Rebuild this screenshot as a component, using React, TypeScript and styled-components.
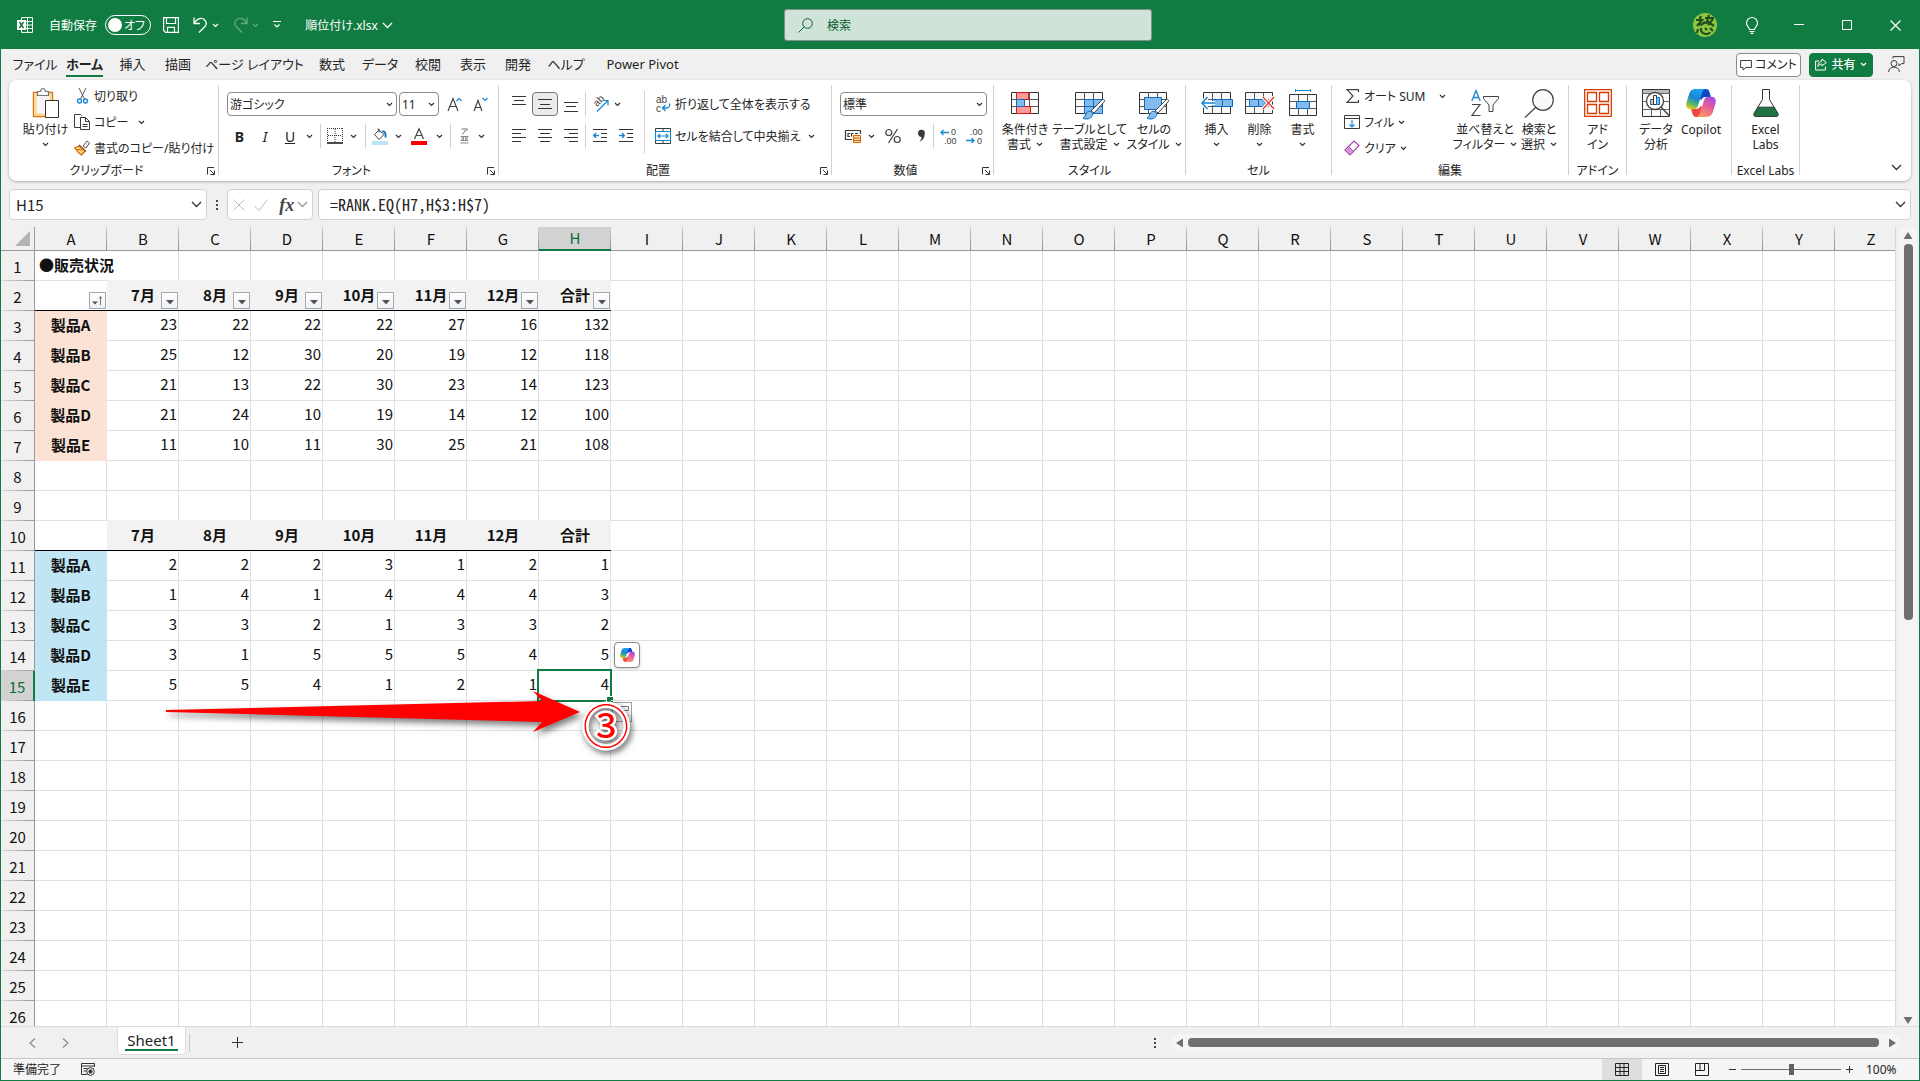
import React from "react";
import styled, { createGlobalStyle, css } from "styled-components";

const GREEN = "#107c41";
const UI = `"Noto Sans", "Noto Sans CJK JP", sans-serif`;
const CELL = `"Noto Sans CJK JP", sans-serif`;

const Global = createGlobalStyle`
  * { box-sizing: border-box; }
  body { margin: 0; }
  button, input, select {
    font: inherit;
    font-feature-settings: inherit;
    color: inherit;
    margin: 0;
    padding: 0;
    border: 0;
    background: none;
    outline: none;
  }
  svg { display: block; flex: none; overflow: visible; }
`;

/* ---------- shell ---------- */
const Shell = styled.div`
  height: 100vh;
  display: flex;
  flex-direction: column;
  background: #f0f0f0;
  border: 1px solid ${GREEN};
  border-top: 0;
  font-family: ${UI};
  font-feature-settings: "palt";
  font-size: 12px;
  line-height: 15px;
  color: #242424;
  overflow: hidden;
`;

/* ---------- title bar ---------- */
const TitleBar = styled.header`
  flex: none;
  height: 49px;
  padding-bottom: 8px;
  display: grid;
  grid-template-columns: 49fr 368px 48fr;
  align-items: end;
  background: ${GREEN};
  color: #fff;
`;
const TitleLeft = styled.div`
  height: 32px;
  display: flex;
  align-items: center;
  padding-left: 16px;
`;
const AutoSave = styled.label`
  display: flex;
  align-items: center;
  gap: 8px;
  margin: 0 12px 0 16px;
`;
const Toggle = styled.span`
  position: relative;
  width: 46px;
  height: 20px;
  border: 1px solid #fff;
  border-radius: 10px;
  display: flex;
  align-items: center;
  padding: 0 5px 0 2px;
  justify-content: space-between;
  &::before {
    content: "";
    width: 14px;
    height: 14px;
    border-radius: 50%;
    background: #fff;
  }
`;
const ToggleInput = styled.input`
  position: absolute;
  inset: 0;
  opacity: 0;
`;
const TitleButton = styled.button<{ $w: number; $dim?: boolean }>`
  width: ${(p) => p.$w}px;
  height: 32px;
  display: flex;
  align-items: center;
  justify-content: center;
  gap: 4px;
  white-space: nowrap;
  opacity: ${(p) => (p.$dim ? 0.35 : 1)};
`;
const SearchBox = styled.label`
  height: 32px;
  display: flex;
  align-items: center;
  gap: 14px;
  padding-left: 13px;
  background: #cfe3d8;
  border: 1px solid #86908a;
  border-radius: 3px;
  color: #0c5f32;
`;
const SearchInput = styled.input`
  flex: 1;
  &::placeholder { color: #0c5f32; opacity: 1; }
`;
const TitleRight = styled.div`
  height: 32px;
  display: flex;
  align-items: center;
  justify-content: flex-end;
`;

/* ---------- tabs ---------- */
const TabRow = styled.nav`
  flex: none;
  height: 31px;
  display: flex;
  align-items: center;
  padding: 0 7px 0 8px;
`;
const Tab = styled.button<{ $w: number; $active?: boolean }>`
  width: ${(p) => p.$w}px;
  height: 24px;
  padding-top: 2px;
  font-size: 13px;
  line-height: 18px;
  white-space: nowrap;
  display: flex;
  justify-content: center;
  ${(p) => p.$active && css`font-weight: 700;`}
  span {
    height: 22px;
    ${(p) => p.$active && css`border-bottom: 2px solid ${GREEN};`}
  }
`;
const Spacer = styled.div`flex: 1;`;
const CommentButton = styled.button`
  height: 24px;
  width: 65px;
  display: flex;
  align-items: center;
  justify-content: center;
  gap: 3px;
  background: #fff;
  border: 1px solid #8a8a8a;
  border-radius: 4px;
  margin-right: 8px;
  white-space: nowrap;
`;
const ShareButton = styled(CommentButton)`
  width: 64px;
  gap: 4px;
  background: ${GREEN};
  border-color: ${GREEN};
  color: #fff;
  font-weight: 500;
`;
const PersonButton = styled.button`
  width: 31px;
  height: 24px;
  display: flex;
  align-items: center;
  justify-content: center;
`;

/* ---------- ribbon ---------- */
const Ribbon = styled.section`
  flex: none;
  height: 101px;
  margin: 0 8px;
  display: flex;
  background: #fff;
  border-radius: 8px;
  box-shadow: 0 1px 3px rgba(0, 0, 0, 0.28);
`;
const GroupBox = styled.section<{ $w: number }>`
  width: ${(p) => p.$w}px;
  display: flex;
  flex-direction: column;
  position: relative;
`;
const GroupBody = styled.div<{ $pad?: number }>`
  flex: 1;
  display: flex;
  align-items: flex-start;
  padding-left: ${(p) => p.$pad ?? 0}px;
`;
const GroupLabel = styled.div<{ $launch?: boolean }>`
  height: 20px;
  line-height: 20px;
  padding-right: ${(p) => (p.$launch ? 14 : 0)}px;
  text-align: center;
  white-space: nowrap;
`;
const Launcher = styled.button`
  position: absolute;
  right: 3px;
  bottom: 6px;
`;
const GroupSep = styled.div`
  flex: none;
  width: 1px;
  margin: 5px 0 6px;
  background: #d1d1d1;
`;
const Big = styled.button<{ $w: number }>`
  width: ${(p) => p.$w}px;
  padding-top: 9px;
  display: flex;
  flex-direction: column;
  align-items: center;
  white-space: nowrap;
`;
const BigIcon = styled.span`
  height: 28px;
  margin-bottom: 5px;
  display: flex;
  align-items: center;
`;
const BigLine = styled.span`
  height: 15px;
  display: flex;
  align-items: center;
  gap: 5px;
`;
const List = styled.div<{ $w?: number }>`
  padding-top: 3px;
  width: ${(p) => (p.$w ? p.$w + "px" : "auto")};
`;
const ListRow = styled.div`
  height: 26px;
  display: flex;
  align-items: center;
`;
const ListButton = styled.button`
  display: flex;
  align-items: center;
  gap: 4px;
  white-space: nowrap;
`;
const IconSlot = styled.span`
  width: 16px;
  display: flex;
  justify-content: center;
`;
const Rows = styled.div<{ $w?: number }>`
  padding-top: 12px;
  display: flex;
  flex-direction: column;
  gap: 8px;
  width: ${(p) => (p.$w ? p.$w + "px" : "auto")};
`;
const Row = styled.div<{ $pad?: number }>`
  height: 24px;
  display: flex;
  align-items: center;
  padding-left: ${(p) => p.$pad ?? 0}px;
`;
const Tool = styled.button<{ $w: number; $on?: boolean }>`
  width: ${(p) => p.$w}px;
  height: 24px;
  display: flex;
  align-items: center;
  justify-content: center;
  font-size: 14px;
  ${(p) => p.$on && css`
    background: #ebebeb;
    border: 1px solid #767676;
    border-radius: 4px;
  `}
`;
const Sep = styled.span<{ $m: number; $tall?: boolean }>`
  flex: none;
  width: 1px;
  height: ${(p) => (p.$tall ? 62 : 24)}px;
  margin: ${(p) => (p.$tall ? 11 : 0)}px ${(p) => p.$m}px 0;
  background: #d1d1d1;
`;
const Combo = styled.span<{ $w: number }>`
  width: ${(p) => p.$w}px;
  height: 24px;
  display: flex;
  align-items: center;
  margin-right: 2px;
  border: 1px solid #8a8a8a;
  border-radius: 4px;
  background: #fff;
  padding-right: 3px;
  select {
    flex: 1;
    min-width: 0;
    height: 22px;
    padding-left: 2px;
    appearance: none;
  }
`;
const Collapse = styled.button`
  align-self: flex-end;
  padding: 0 9px 10px;
`;

/* ---------- formula bar ---------- */
const FormulaRow = styled.div`
  flex: none;
  height: 31px;
  margin: 8px 8px 7px;
  display: flex;
  align-items: stretch;
  font-size: 15px;
`;
const Field = styled.div<{ $w?: number }>`
  ${(p) => (p.$w ? css`width: ${p.$w}px;` : css`flex: 1;`)}
  display: flex;
  align-items: center;
  background: #fff;
  border: 1px solid #d1d1d1;
  border-radius: 4px;
  padding: 0 4px;
`;
const FieldInput = styled.input`
  flex: 1;
  min-width: 0;
  padding-left: 2px;
  font-family: ${CELL};
`;
const FormulaInput = styled(FieldInput)`
  padding: 0 0 2px 7px;
  font-size: 16px;
  font-feature-settings: "hwid";
`;
const Grip = styled.span`
  width: 20px;
  display: flex;
  align-items: center;
  justify-content: center;
`;
const FormulaGap = styled.span`width: 5px;`;
const FxButton = styled.button<{ $w: number }>`
  width: ${(p) => p.$w}px;
  display: flex;
  justify-content: center;
  font: italic 700 18px/24px "Liberation Serif", serif;
  color: #444;
`;

/* ---------- sheet ---------- */
const SheetArea = styled.main`
  flex: 1;
  min-height: 0;
  display: flex;
`;
const GridClip = styled.div`
  position: relative;
  flex: 1;
  min-width: 0;
  overflow: hidden;
  background: #fff;
  border-right: 1px solid #d9d9d9;
`;
const Table = styled.table`
  table-layout: fixed;
  width: 1906px;
  border-collapse: separate;
  border-spacing: 0;
  font-family: ${CELL};
  font-feature-settings: normal;
  font-size: 15px;
  line-height: 20px;
  color: #111;
`;
const Corner = styled.td`
  width: 34px;
  height: 24px;
  padding: 0 3px 3px 0;
  vertical-align: bottom;
  background: #f0f0f0;
  border-right: 1px solid #999;
  border-bottom: 1px solid #999;
  svg { margin-left: auto; }
`;
const ColHead = styled.th<{ $on: boolean }>`
  width: 72px;
  height: 24px;
  padding: 0;
  font-weight: 400;
  border-bottom: 1px solid #999;
  background: linear-gradient(#d0d0d0, #8f8f8f) right / 1px 100% no-repeat, #f0f0f0;
  ${(p) => p.$on && css`
    color: #0f6b39;
    background-color: #d2d2d2;
    border-bottom: 2px solid ${GREEN};
  `}
`;
const RowHead = styled.th<{ $on: boolean }>`
  height: 30px;
  padding: 2px 0 0;
  font-weight: 400;
  border-right: 1px solid #999;
  background: linear-gradient(90deg, #d8d8d8, #999) bottom / 100% 1px no-repeat, #f0f0f0;
  ${(p) => p.$on && css`
    color: #0f6b39;
    background-color: #d2d2d2;
    border-right: 2px solid ${GREEN};
  `}
`;
type Kind = "plain" | "title" | "blankHead" | "head" | "peach" | "sky" | "num" | "sel";
const Cell = styled.td<{ $k: Kind; $above?: boolean }>`
  position: relative;
  height: 30px;
  padding: 0 1px 3px 0;
  white-space: nowrap;
  text-align: right;
  border-right: 1px solid #e0e0e0;
  border-bottom: 1px solid ${(p) => (p.$above ? "#f2f2f2" : "#e0e0e0")};
  ${(p) => p.$k === "title" && css`
    padding: 0 0 2px 4px;
    text-align: left;
    font-weight: 700;
    border-right: 0;
  `}
  ${(p) => (p.$k === "head" || p.$k === "blankHead") && css`
    padding: 0 0 2px;
    text-align: center;
    font-weight: 700;
    border-right: 0;
    border-bottom-color: #000;
  `}
  ${(p) => p.$k === "head" && css`
    background: #f2f2f2;
  `}
  ${(p) => (p.$k === "peach" || p.$k === "sky") && css`
    padding: 0 0 2px;
    text-align: center;
    font-weight: 700;
    background: ${p.$k === "peach" ? "#fbe2d5" : "#c0e6f5"};
    border-color: ${p.$k === "peach" ? "#fbe2d5" : "#c0e6f5"};
  `}
  ${(p) => p.$k === "sel" && css`
    &::before {
      content: "";
      position: absolute;
      inset: -2px;
      border: 2px solid ${GREEN};
    }
    &::after {
      content: "";
      position: absolute;
      right: -3px;
      bottom: -3px;
      width: 6px;
      height: 6px;
      background: ${GREEN};
      border: solid #fff;
      border-width: 1px 0 0 1px;
    }
  `}
`;
const FilterButton = styled.button`
  position: absolute;
  right: 1px;
  bottom: 1px;
  width: 17px;
  height: 17px;
  display: flex;
  align-items: center;
  justify-content: center;
  background: linear-gradient(#fff, #eef1f5);
  border: 1px solid #a3a9b3;
`;
const CopilotChip = styled.button`
  position: absolute;
  left: 613px;
  top: 415px;
  width: 26px;
  height: 26px;
  display: flex;
  align-items: center;
  justify-content: center;
  background: #fff;
  border: 1px solid #8a8a8a;
  border-radius: 4px;
  box-shadow: 0 1px 3px rgba(0, 0, 0, 0.2);
`;
const FillOptions = styled.button`
  position: absolute;
  left: 611px;
  top: 475px;
  width: 20px;
  height: 20px;
  background: #fff;
  border: 1px solid #a0a0a0;
`;
const Arrow = styled.svg`
  position: absolute;
  left: 155px;
  top: 454px;
  filter: drop-shadow(3px 4px 3px rgba(0, 0, 0, 0.5));
`;
const StepMark = styled.span`
  position: absolute;
  left: 582px;
  top: 473px;
  font: 400 46px/46px ${CELL};
  color: #f00;
  -webkit-text-stroke: 5px #fff;
  paint-order: stroke fill;
  filter: drop-shadow(2px 3px 3px rgba(0, 0, 0, 0.6));
`;
const VScroll = styled.div`
  width: 18px;
  margin: 0 2px 0 3px;
  display: flex;
  flex-direction: column;
  align-items: center;
  padding: 5px 0 2px;
  background: #f5f5f5;
  border-radius: 8px;
`;
const VTrack = styled.div`
  flex: 1;
  width: 9px;
  margin: 4px 0;
`;
const VThumb = styled.div`
  height: 49%;
  border-radius: 4px;
  background: #6f6f6f;
`;

/* ---------- sheet tabs & status ---------- */
const SheetBar = styled.div`
  flex: none;
  height: 32px;
  display: flex;
  align-items: center;
  border-top: 1px solid #dcdcdc;
  padding-right: 18px;
`;
const NavButton = styled.button<{ $w: number }>`
  width: ${(p) => p.$w}px;
  height: 30px;
  display: flex;
  align-items: center;
  justify-content: center;
`;
const PrevButton = styled(NavButton)`padding-left: 14px;`;
const SheetTab = styled.button`
  align-self: flex-start;
  width: 69px;
  height: 28px;
  margin-left: 35px;
  background: #fff;
  border: 1px solid #dcdcdc;
  border-top: 0;
  border-radius: 0 0 5px 5px;
  font-size: 15px;
  display: flex;
  justify-content: center;
  span {
    padding: 3px 2px 0;
    height: 24px;
    line-height: 20px;
    border-bottom: 2px solid ${GREEN};
  }
`;
const TabSep = styled.span`
  width: 1px;
  height: 18px;
  margin-left: 3px;
  background: #c8c8c8;
`;
const HScroll = styled.div`
  flex: 0 1 730px;
  height: 17px;
  margin-left: 6px;
  display: flex;
  align-items: center;
  padding: 0 5px;
  background: #f5f5f5;
  border-radius: 8px;
`;
const HThumb = styled.div`
  flex: 1;
  height: 9px;
  margin: 0 9px 0 4px;
  border-radius: 4px;
  background: #6f6f6f;
`;
const Status = styled.footer`
  flex: none;
  height: 22px;
  display: flex;
  align-items: center;
  gap: 20px;
  padding: 0 19px 0 12px;
  background: #f5f5f5;
  border-top: 1px solid #c6c6c6;
`;
const Views = styled.div`
  display: flex;
  align-self: stretch;
`;
const ViewButton = styled.button<{ $on?: boolean }>`
  width: 40px;
  display: flex;
  align-items: center;
  justify-content: center;
  background: ${(p) => (p.$on ? "#dedede" : "transparent")};
`;
const Zoom = styled.div`
  display: flex;
  align-items: center;
  margin-left: -14px;
  gap: 4px;
`;
const ZoomRange = styled.input`
  width: 100px;
  height: 12px;
  appearance: none;
  background: linear-gradient(#6b6b6b, #6b6b6b) center / 100% 1px no-repeat;
  &::-webkit-slider-thumb {
    appearance: none;
    width: 5px;
    height: 11px;
    background: #616161;
  }
`;
const ZoomButton = styled.button`
  width: 9px;
  height: 12px;
  display: flex;
  align-items: center;
  justify-content: center;
`;
const ZoomValue = styled.span`
  width: 34px;
  margin-left: 8px;
`;

/* ---------- icons ---------- */
const Svg = ({ w, h, vb, children }: { w: number; h: number; vb?: string; children: React.ReactNode }) => (
  <svg width={w} height={h} viewBox={vb ?? `0 0 ${w} ${h}`} fill="none" stroke="#3b3b3b" strokeWidth="1" aria-hidden>
    {children}
  </svg>
);
const Glyph = styled.text`
  font-family: "Liberation Sans", sans-serif;
  fill: #444;
  stroke: none;
`;
const Chev = ({ c = "#333", big }: { c?: string; big?: boolean }) =>
  big ? (
    <Svg w={11} h={7}><path d="M1 1l4.500 4.500L10 1" stroke={c} strokeWidth="1.300" /></Svg>
  ) : (
    <Svg w={7} h={5}><path d="M1 1l2.500 2.500L6 1" stroke={c} strokeWidth="1.200" /></Svg>
  );
const LaunchIcon = () => (
  <Svg w={8} h={8}><path d="M.5 7.500V.5H7M3 3l4 4M7.500 3.500v4h-4" stroke="#333" /></Svg>
);
const CopilotIcon = ({ w, h, id }: { w: number; h: number; id: string }) => (
  <svg width={w} height={h} viewBox="0 0 30 28" aria-hidden>
    <defs>
      <linearGradient id={id + "a"} x1="0.6" y1="0" x2="0.2" y2="1">
        <stop offset="0" stopColor="#1aa6f5" /><stop offset="0.45" stopColor="#1b84d0" />
        <stop offset="0.72" stopColor="#4fb869" /><stop offset="1" stopColor="#f4cf14" />
      </linearGradient>
      <linearGradient id={id + "b"} x1="0.8" y1="0" x2="0.3" y2="1">
        <stop offset="0" stopColor="#a54be8" /><stop offset="0.45" stopColor="#e75b9c" />
        <stop offset="1" stopColor="#ff9a62" />
      </linearGradient>
    </defs>
    <path d="M17 0h3c2 0 3 1.200 3.600 3.400L25 8h-5c-2.500 0-4 1-4.800 3.400L12 6z" fill="#1149c4" />
    <path d="M13 28h-3c-2 0-3-1.200-3.600-3.400L5 20h5c2.500 0 4-1 4.800-3.400L18 22z" fill="#ee4a42" />
    <path d="M9.500 0H20c-2 0-3.200 1.200-3.900 3.400L12.200 16c-1 3-2.200 4.300-5 4.300H4.500C.8 20.300-.4 17 .5 13.500L3.300 4.400C4.200 1.600 6 0 9.500 0z" fill={`url(#${id}a)`} />
    <path d="M20.500 28H10c2 0 3.200-1.200 3.900-3.400L17.800 12c1-3 2.200-4.300 5-4.300h2.700c3.700 0 4.900 3.300 4 6.800l-2.800 9.100c-.9 2.800-2.700 4.400-6.200 4.400z" fill={`url(#${id}b)`} />
  </svg>
);
const GridBase = () => (
  <>
    <path d="M.5.5h27v21H.5z" fill="#fafafa" stroke="#333" />
    <path d="M.5 7.500h27M.5 14.500h27M9.500.5v21M18.500.5v21" stroke="#555" />
  </>
);
const Brush = () => (
  <>
    <path d="M16 19L27 8c1.500-1.500 3.500 0 2 2L19 21z" fill="#fff" stroke="#444" />
    <path d="M8 26c3-1 2-5 5-6.500 3-1 5.500 1.500 4.500 4C16 27 11 28 8 26z" fill="#83bcec" stroke="#0f6cbd" />
  </>
);
const CondIcon = () => (
  <Svg w={28} h={22}>
    <GridBase />
    <path d="M5.500.5h12v7h-12zM5.500 14.500h14v7h-14z" fill="#ff9a9a" stroke="#e3170a" />
    <path d="M5.500 7.500h8v7h-8z" fill="#83bcec" stroke="#0f6cbd" />
  </Svg>
);
const TableIcon = () => (
  <Svg w={30} h={28} vb="0 -3 30 28">
    <GridBase /><path d="M9.500 7.500h18v14h-18z" fill="#83bcec" stroke="#0f6cbd" />
    <path d="M9.500 14.500h18M18.500 7.500v14" stroke="#0f6cbd" /><Brush />
  </Svg>
);
const StyleIcon = () => (
  <Svg w={30} h={28} vb="0 -3 30 28">
    <GridBase /><path d="M5.500 5.500h17v12h-17z" fill="#83bcec" stroke="#0f6cbd" /><Brush />
  </Svg>
);
const InsertIcon = () => (
  <Svg w={32} h={22}>
    <g transform="translate(2 0)"><GridBase /></g>
    <path d="M11.500 7.500h20v7h-20z" fill="#83bcec" stroke="#0f6cbd" /><path d="M21.500 7.500v7" stroke="#0f6cbd" />
    <path d="M14 11H1M6.500 5L1 11l5.500 6" stroke="#fff" strokeWidth="4" />
    <path d="M14 11H1M6.500 5L1 11l5.500 6" stroke="#1787d4" strokeWidth="1.500" />
  </Svg>
);
const DeleteIcon = () => (
  <Svg w={30} h={22}>
    <GridBase />
    <path d="M4.500 7.500h13l3 3.500-3 3.500h-13z" fill="#83bcec" stroke="#0f6cbd" /><path d="M13.500 7.500v7" stroke="#0f6cbd" />
    <path d="M18 5l11 12M29 5L18 17" stroke="#fff" strokeWidth="4" />
    <path d="M18 5l11 12M29 5L18 17" stroke="#e8413a" strokeWidth="1.400" />
  </Svg>
);
const FormatIcon = () => (
  <Svg w={28} h={28} vb="0 -5 28 28">
    <GridBase /><path d="M7.500 7.500h13v7h-13z" fill="#83bcec" stroke="#0f6cbd" />
    <path d="M6.500-5v3M21.500-5v3M6.500-3.500h15" stroke="#1787d4" />
  </Svg>
);
const PasteIcon = () => (
  <Svg w={28} h={30}>
    <path d="M1.500 4.500h19v24h-19z" fill="#fff" stroke="#d9730b" strokeWidth="1.400" />
    <path d="M3.500 6.500h15v20h-15z" fill="#f6f6f6" stroke="#fbd580" strokeWidth="2" />
    <path d="M5.500 7.500v-4h3c.5-4 4.500-4 5 0h3v4z" fill="#fafafa" stroke="#777" strokeWidth="1.200" />
    <path d="M13.500 12.500h13v17h-13z" fill="#fff" stroke="#333" />
  </Svg>
);
const CutIcon = () => (
  <Svg w={11} h={16}>
    <path d="M2 0l5.500 11M9 0L3.500 11" stroke="#555" />
    <circle cx="2.500" cy="13" r="2" stroke="#1787d4" strokeWidth="1.300" /><circle cx="8.500" cy="13" r="2" stroke="#1787d4" strokeWidth="1.300" />
  </Svg>
);
const CopyIcon = () => (
  <Svg w={16} h={16}>
    <path d="M6 13.500H.5V.5h6l1 1" /><path d="M6.500 3.500h5l4 4v8h-9z" fill="#fff" /><path d="M11.500 3.500v4h4M8.500 10.500h5M8.500 12.500h5" />
  </Svg>
);
const PainterIcon = () => (
  <Svg w={16} h={16}>
    <path d="M9 6l4-5 2.500 2L12 8z" fill="#fff" stroke="#555" /><path d="M5 5l7 6.500" stroke="#555" strokeWidth="1.600" />
    <path d="M5 6L.8 8c2 3 4 5.500 6.700 7l3.500-4z" fill="#fbd580" stroke="#d9620b" strokeWidth="1.300" /><path d="M3 9.500l5 .5" stroke="#d9620b" />
  </Svg>
);
const lines = (a: [number, number][], ys: number[]) => (
  <Svg w={15} h={16}>{a.map(([x, w], i) => <path key={i} d={`M${x} ${ys[i]}.5h${w}`} stroke="#333" />)}</Svg>
);
const Top = () => lines([[0, 14], [2, 10], [0, 14]], [0, 4, 8]);
const Mid = () => lines([[0, 14], [2, 10], [0, 14]], [3, 8, 12]);
const Bot = () => lines([[0, 14], [2, 10], [0, 14]], [6, 10, 15]);
const AL = () => lines([[0, 14], [0, 9], [0, 14], [0, 9]], [1, 5, 9, 13]);
const AC = () => lines([[0, 14], [2, 10], [0, 14], [2, 10]], [1, 5, 9, 13]);
const AR = () => lines([[0, 14], [5, 9], [0, 14], [5, 9]], [1, 5, 9, 13]);
const Indent = ({ out }: { out?: boolean }) => (
  <Svg w={15} h={16}>
    <path d="M0 1.500h14M8 5.500h6M8 9.500h6M0 13.500h14" stroke="#333" />
    <path d={out ? "M6 7.500H1M3 5L.7 7.500 3 10" : "M0 7.500h5M3 5l2.300 2.500L3 10"} stroke="#1787d4" strokeWidth="1.300" />
  </Svg>
);
const OrientIcon = () => (
  <Svg w={17} h={16}>
    <Glyph x="0" y="0" transform="translate(5 11) rotate(-45)" fontSize="10">ab</Glyph>
    <path d="M5 15.500L15.500 5M11 4.500h5V9.500" stroke="#1787d4" strokeWidth="1.200" />
  </Svg>
);
const WrapIcon = () => (
  <Svg w={14} h={18}>
    <Glyph x="0" y="8" fontSize="10">ab</Glyph><Glyph x="0" y="17" fontSize="10">c</Glyph>
    <path d="M13.500 8.500c1 3-1 4.500-3.500 4.500H7M9.500 10l-3 3 3 3" stroke="#1787d4" strokeWidth="1.300" />
  </Svg>
);
const MergeIcon = () => (
  <Svg w={16} h={16}>
    <path d="M.5.5h15v15H.5zM8 .5v3M8 12.500v3" /><path d="M.5 3.500h15v9H.5z" fill="#fff" stroke="#1787d4" strokeWidth="1.200" />
    <path d="M3 8h10M5 6L3 8l2 2M11 6l2 2-2 2" stroke="#1787d4" strokeWidth="1.200" />
  </Svg>
);
const BorderIcon = () => (
  <Svg w={16} h={16}>
    <path d="M.5 0v14M15.500 0v14M0 .5h15M8 1v13M1 7.500h14" strokeDasharray="1 1" stroke="#333" /><path d="M0 15h16" stroke="#111" strokeWidth="1.500" />
  </Svg>
);
const BucketIcon = () => (
  <Svg w={16} h={17}>
    <path d="M7.500 1.500L2.500 6.500l4.500 5 5-5-4.500-4z" fill="#fff" stroke="#444" /><path d="M6 .5l1.500 4" stroke="#444" />
    <path d="M10 3.500c3-1 4 2 3.500 6" stroke="#0f6cbd" strokeWidth="1.800" /><path d="M0 13h16v4H0z" fill="#bfe5f5" stroke="none" />
  </Svg>
);
const FontColorIcon = () => (
  <Svg w={16} h={17}><path d="M3.500 11L8 .8 12.500 11M5 7.500h6" stroke="#444" strokeWidth="1.200" /><path d="M0 13h16v4H0z" fill="#f00" stroke="none" /></Svg>
);
const PhoneticIcon = () => (
  <Svg w={9} h={16}>
    <path d="M1.500 1h6L5.500 3.500M4.500 2.500c0 2-1 3-2.500 3.500" stroke="#777" />
    <path d="M.5 8.500h8M2 9v3M7 9v3M.5 12.500h8M.5 15h8M3.500 8.500v4M5.500 8.500v4" stroke="#8a8a8a" />
  </Svg>
);
const GrowIcon = ({ down }: { down?: boolean }) => (
  <Svg w={15} h={15}>
    {down ? <path d="M1 14L5 3.500 9 14M2.500 10.500h5" stroke="#444" strokeWidth="1.200" /> : <path d="M1 14L6 1.500 11 14M2.500 9.500h7" stroke="#444" strokeWidth="1.200" />}
    <path d={down ? "M9.500 1L12 3.500 14.500 1" : "M9.500 4L12 1.500 14.500 4"} stroke="#1787d4" strokeWidth="1.200" />
  </Svg>
);
const MoneyIcon = () => (
  <Svg w={17} h={15}>
    <path d="M7 10.500H.5v-9h15V5M5 4.500H3v3h2M8.500 4.500h-2v3M10 4.500h3" strokeWidth="1.200" />
    <path d="M8.500 6.500h7v7h-7z" fill="#fbd9a8" stroke="#d9620b" /><path d="M8.500 9h7M8.500 11.500h7" stroke="#d9620b" />
  </Svg>
);
const DecIcon = ({ less }: { less?: boolean }) => (
  <Svg w={16} h={18}>
    <Glyph x={less ? 4 : 11} y="8" fontSize="9">{less ? ".00" : "0"}</Glyph>
    <Glyph x={less ? 11 : 4} y="17" fontSize="9">{less ? "0" : ".00"}</Glyph>
    <path d={less ? "M0 13.500h8M5.500 11L8 13.500 5.500 16" : "M9 5.500H1M3.500 3L1 5.500 3.500 8"} stroke="#1787d4" strokeWidth="1.300" />
  </Svg>
);
const SigmaIcon = () => <Svg w={13} h={14}><path d="M12.500 3V.6H1L7 7l-6 6.400h11.500V11" stroke="#444" strokeWidth="1.200" /></Svg>;
const FillIcon = () => (
  <Svg w={16} h={14}><path d="M.5.5h15v13H.5zM.5 3.500h15" /><path d="M8 5v7M5.500 9.500L8 12l2.500-2.500" stroke="#1787d4" strokeWidth="1.200" /></Svg>
);
const EraserIcon = () => (
  <Svg w={16} h={16}><path d="M1 10L10 1l5 4.500L6 15z" fill="#fff" stroke="#a347ab" strokeWidth="1.200" /><path d="M1 10l3.500-3.500 5 5L6 15z" fill="#d59ada" stroke="#a347ab" /></Svg>
);
const SortIcon = () => (
  <Svg w={28} h={28}>
    <path d="M.8 12L5 1.500 9.200 12M2.300 8.500h5.500" stroke="#1787d4" strokeWidth="1.300" /><path d="M1 15.500h8L1 26.500h8.500" stroke="#444" strokeWidth="1.200" />
    <path d="M12.500 7.500h15v2L22 16v6.500h-4V16l-5.500-6.500z" fill="#fafafa" stroke="#444" />
  </Svg>
);
const FindIcon = () => <Svg w={30} h={29}><circle cx="19" cy="11" r="10.300" fill="#fafafa" stroke="#444" strokeWidth="1.200" /><path d="M11.500 18.500L1 28.500" stroke="#444" strokeWidth="1.200" /></Svg>;
const AddinIcon = () => <Svg w={28} h={28}><path d="M.7.7h26.600v26.600H.7zM3.500 3.500h9v9h-9zM15.500 3.500h9v9h-9zM3.500 15.500h9v9h-9zM15.500 15.500h9v9h-9z" stroke="#d83b01" strokeWidth="1.300" /></Svg>;
const AnalyzeIcon = () => (
  <Svg w={28} h={28}>
    <path d="M.5.5h27v27H.5z" fill="#fafafa" stroke="#333" /><path d="M1 1h26v3H1z" fill="#bbb" stroke="none" />
    <path d="M.5 4.500h27M.5 12.500h27M.5 20.500h27M9.500 20v7M18.500 20v7" stroke="#666" />
    <circle cx="13" cy="12" r="8.500" fill="#fff" stroke="#444" strokeWidth="1.300" /><path d="M19 18l8 8.500" stroke="#444" strokeWidth="1.500" />
    <path d="M8.500 10.500h3v5h-3z" fill="#ccc" stroke="#555" /><path d="M11.500 6.500h3v9h-3z" fill="#fff" stroke="#333" /><path d="M14.500 8.500h3v7h-3z" fill="#83bcec" stroke="#0f6cbd" />
  </Svg>
);
const FlaskIcon = () => (
  <Svg w={26} h={28}>
    <path d="M9.500.5h7v10l8.500 14c.6 1.500 0 3-2 3H3c-2 0-2.600-1.500-2-3l8.500-14z" fill="#fafafa" stroke="#333" />
    <path d="M5 18h16l4 7c.4 1.300-.4 2.500-2 2.500H3c-1.600 0-2.400-1.200-2-2.500z" fill="#217346" stroke="#333" strokeWidth=".6" />
  </Svg>
);
const ExcelIcon = () => (
  <Svg w={16} h={16}>
    <path d="M4.500.6h11v14.800h-11zM10.500.6v14.800M4 4.500h11.500M4 8h11.500M4 11.500h11.500" stroke="#fff" /><path d="M0 3h9v10H0z" fill="#fff" stroke="none" />
    <path d="M2.500 5l4 6M6.500 5l-4 6" stroke={GREEN} strokeWidth="1.500" />
  </Svg>
);
const SaveIcon = () => <Svg w={16} h={16}><path d="M.6.6h14.800v14.800H2.500L.6 13.500zM3.500.6v5.900h9V.6M4.500 15.400v-5h7v5" stroke="#fff" strokeWidth="1.200" /></Svg>;
const UndoIcon = () => <Svg w={15} h={16}><path d="M1 .5v6h6M1.200 6.300C4 1 9 .5 11.500 2.800c2.500 2.400 2 5 .2 7L6 15.500" stroke="#fff" strokeWidth="1.300" /></Svg>;
const RedoIcon = () => <Svg w={15} h={16}><path d="M14 .5v6H8M13.800 6.300C11 1 6 .5 3.500 2.800 1 5.200 1.500 7.800 3.300 9.800L9 15.500" stroke="#fff" strokeWidth="1.300" /></Svg>;
const Avatar = () => (
  <Svg w={24} h={24}>
    <circle cx="12" cy="12" r="12" fill="#8cc63f" stroke="none" />
    <path d="M3 7h6l-5 6M8 3L6 8M4 12l6-1M12 5h9M16 2l-3 9M14 8l7 5M20 6l-5 6M8 12l4-3M5 16l-1 4M8 15c-1 7 8 7 9 4M12 15l2 2M17 15l3 3" stroke="#1f4d1c" strokeWidth="2.200" />
  </Svg>
);
const BulbIcon = () => (
  <Svg w={12} h={17}><path d="M3.500 12.500c0-2-3-3-3-6.500a5.500 5.500 0 0111 0c0 3.500-3 4.500-3 6.500zM3.500 14.500h5M4.500 16.400h3" stroke="#fff" strokeWidth="1.200" /></Svg>
);
const CommentIcon = () => <Svg w={12} h={12}><path d="M.6 1.500h10.800v7H6L3 11V8.500H.6z" /></Svg>;
const ShareIcon = () => <Svg w={12} h={13}><path d="M4 3H.6v9h9.800V8.500M7 1l4.300 3.500L7 8V6C5 6 4 7 3 8.500 3 5.500 4.500 3.300 7 3z" stroke="#fff" /></Svg>;
const PersonIcon = () => <Svg w={17} h={17}><circle cx="6" cy="7.500" r="3" /><path d="M.6 16c0-6.500 10.800-6.500 10.800 0M5 2.500V.6h11v7h-2.500L11 10V7.600" /></Svg>;
const FunnelIcon = ({ sorted }: { sorted?: boolean }) => (
  <Svg w={13} h={13}>
    {sorted ? (
      <><path d="M1 7.500h6L4 10.500z" fill="#555" stroke="none" /><path d="M9.500 11V2.500M8 4.500l1.500-2 1.500 2" stroke="#777" /></>
    ) : (
      <path d="M3 6h8l-4 4.500z" fill="#555" stroke="none" />
    )}
  </Svg>
);

/* ---------- pieces ---------- */
const Group = ({ w, label, pad, launch, children }: { w: number; label?: string; pad?: number; launch?: boolean; children: React.ReactNode }) => (
  <>
    <GroupBox $w={w}>
      <GroupBody $pad={pad}>{children}</GroupBody>
      <GroupLabel $launch={launch}>{label}</GroupLabel>
      {launch && <Launcher aria-label={`${label}の設定`}><LaunchIcon /></Launcher>}
    </GroupBox>
    <GroupSep />
  </>
);
const BigButton = ({ w, icon, a, b, menu }: { w: number; icon: React.ReactNode; a: string; b?: string; menu?: boolean }) => (
  <Big $w={w}>
    <BigIcon>{icon}</BigIcon>
    <BigLine>{a}</BigLine>
    {(b || menu) && <BigLine>{b}{menu && <Chev />}</BigLine>}
  </Big>
);
const Item = ({ icon, text, menu }: { icon: React.ReactNode; text: string; menu?: boolean }) => (
  <ListButton><IconSlot>{icon}</IconSlot>{text}{menu && <Chev />}</ListButton>
);
const Drop = ({ w, name }: { w: number; name: string }) => <Tool $w={w} aria-label={name}><Chev /></Tool>;

const tabs: [string, number][] = [
  ["ファイル", 52], ["ホーム", 47], ["挿入", 49], ["描画", 42], ["ページ レイアウト", 111], ["数式", 44],
  ["データ", 52], ["校閲", 44], ["表示", 46], ["開発", 44], ["ヘルプ", 52], ["Power Pivot", 101],
];
const columns = "ABCDEFGHIJKLMNOPQRSTUVWXYZ".split("");
const months = ["7月", "8月", "9月", "10月", "11月", "12月", "合計"];
const products = ["製品A", "製品B", "製品C", "製品D", "製品E"];
const sales = [
  [23, 22, 22, 22, 27, 16, 132],
  [25, 12, 30, 20, 19, 12, 118],
  [21, 13, 22, 30, 23, 14, 123],
  [21, 24, 10, 19, 14, 12, 100],
  [11, 10, 11, 30, 25, 21, 108],
];
const ranks = [
  [2, 2, 2, 3, 1, 2, 1],
  [1, 4, 1, 4, 4, 4, 3],
  [3, 3, 2, 1, 3, 3, 2],
  [3, 1, 5, 5, 5, 4, 5],
  [5, 5, 4, 1, 2, 1, 4],
];

function cellAt(row: number, col: number): { k: Kind; v?: React.ReactNode; above?: boolean } {
  const above = (row === 1 || row === 9) && col >= 1 && col <= 7;
  if (row === 1 && col === 0) return { k: "title", v: "●販売状況" };
  if (col > 7) return { k: "plain" };
  if (row === 2 || row === 10) {
    const filter = row === 2 && (
      <FilterButton aria-label={`${columns[col]}列のフィルター`}><FunnelIcon sorted={col === 0} /></FilterButton>
    );
    return col === 0 ? { k: "blankHead", v: filter } : { k: "head", v: <>{months[col - 1]}{filter}</> };
  }
  const top = row >= 3 && row <= 7;
  if (top || (row >= 11 && row <= 15)) {
    const i = top ? row - 3 : row - 11;
    if (col === 0) return { k: top ? "peach" : "sky", v: products[i] };
    return { k: row === 15 && col === 7 ? "sel" : "num", v: (top ? sales : ranks)[i][col - 1] };
  }
  return { k: "plain", above };
}

export default function App() {
  return (
    <Shell>
      <Global />
      <TitleBar>
        <TitleLeft>
          <ExcelIcon />
          <AutoSave>
            自動保存
            <Toggle><ToggleInput type="checkbox" role="switch" aria-label="自動保存" />オフ</Toggle>
          </AutoSave>
          <TitleButton $w={16} aria-label="上書き保存"><SaveIcon /></TitleButton>
          <TitleButton $w={54} aria-label="元に戻す"><UndoIcon /><Chev c="#fff" /></TitleButton>
          <TitleButton $w={26} $dim aria-label="やり直し"><RedoIcon /><Chev c="#fff" /></TitleButton>
          <TitleButton $w={36} aria-label="クイック アクセス ツール バーのカスタマイズ">
            <Svg w={8} h={8}><path d="M0 .5h8M1.500 3.500L4 6l2.500-2.500" stroke="#fff" strokeWidth="1.200" /></Svg>
          </TitleButton>
          <TitleButton $w={108}>順位付け.xlsx<Chev c="#fff" big /></TitleButton>
        </TitleLeft>
        <SearchBox>
          <Svg w={15} h={15}><circle cx="9.500" cy="5.500" r="4.800" stroke="#0c5f32" /><path d="M6 9l-5.500 5.500" stroke="#0c5f32" /></Svg>
          <SearchInput type="text" placeholder="検索" aria-label="検索" />
        </SearchBox>
        <TitleRight>
          <TitleButton $w={47} aria-label="アカウント"><Avatar /></TitleButton>
          <TitleButton $w={47} aria-label="ヒント"><BulbIcon /></TitleButton>
          <TitleButton $w={48} aria-label="最小化"><Svg w={10} h={10}><path d="M0 4.500h10" stroke="#fff" /></Svg></TitleButton>
          <TitleButton $w={48} aria-label="最大化"><Svg w={10} h={10}><path d="M.5.5h9v9h-9z" stroke="#fff" /></Svg></TitleButton>
          <TitleButton $w={48} aria-label="閉じる"><Svg w={11} h={11}><path d="M.5.5l10 10M10.500.5l-10 10" stroke="#fff" strokeWidth="1.200" /></Svg></TitleButton>
        </TitleRight>
      </TitleBar>

      <TabRow>
        {tabs.map(([t, w]) => <Tab key={t} $w={w} $active={t === "ホーム"}><span>{t}</span></Tab>)}
        <Spacer />
        <CommentButton><CommentIcon />コメント</CommentButton>
        <ShareButton><ShareIcon />共有<Chev c="#fff" /></ShareButton>
        <PersonButton aria-label="プレゼンス"><PersonIcon /></PersonButton>
      </TabRow>

      <Ribbon>
        <Group w={209} label="クリップボード" pad={8} launch>
          <BigButton w={57} icon={<PasteIcon />} a="貼り付け" menu />
          <List>
            <ListRow><Item icon={<CutIcon />} text="切り取り" /></ListRow>
            <ListRow><Item icon={<CopyIcon />} text="コピー" /><Drop w={26} name="コピーのメニュー" /></ListRow>
            <ListRow><Item icon={<PainterIcon />} text="書式のコピー/貼り付け" /></ListRow>
          </List>
        </Group>
        <Group w={279} label="フォント" pad={8} launch>
          <Rows>
            <Row>
              <Combo $w={170}><select aria-label="フォント"><option>游ゴシック</option></select><Chev /></Combo>
              <Combo $w={40}><select aria-label="フォント サイズ"><option>11</option></select><Chev /></Combo>
              <Tool $w={26} aria-label="フォント サイズの拡大"><GrowIcon /></Tool>
              <Tool $w={26} aria-label="フォント サイズの縮小"><GrowIcon down /></Tool>
            </Row>
            <Row>
              <Tool $w={25} aria-label="太字"><b>B</b></Tool>
              <Tool $w={26} aria-label="斜体"><i>I</i></Tool>
              <Tool $w={24} aria-label="下線"><u>U</u></Tool>
              <Drop w={14} name="下線の種類" /><Sep $m={4} />
              <Tool $w={20} aria-label="罫線"><BorderIcon /></Tool>
              <Drop w={16} name="罫線の種類" /><Sep $m={4} />
              <Tool $w={20} aria-label="塗りつぶしの色"><BucketIcon /></Tool>
              <Drop w={16} name="塗りつぶしの色一覧" />
              <Tool $w={26} aria-label="フォントの色"><FontColorIcon /></Tool>
              <Drop w={14} name="フォントの色一覧" /><Sep $m={4} />
              <Tool $w={18} aria-label="ふりがな"><PhoneticIcon /></Tool>
              <Drop w={16} name="ふりがなのメニュー" />
            </Row>
          </Rows>
        </Group>
        <Group w={332} label="配置" pad={7} launch>
          <Rows $w={133}>
            <Row>
              <Tool $w={26} aria-label="上揃え"><Top /></Tool>
              <Tool $w={26} $on aria-label="上下中央揃え"><Mid /></Tool>
              <Tool $w={26} aria-label="下揃え"><Bot /></Tool>
              <Sep $m={1} />
              <Tool $w={26} aria-label="方向"><OrientIcon /></Tool>
              <Drop w={8} name="方向のメニュー" />
            </Row>
            <Row>
              <Tool $w={26} aria-label="左揃え"><AL /></Tool>
              <Tool $w={26} aria-label="中央揃え"><AC /></Tool>
              <Tool $w={26} aria-label="右揃え"><AR /></Tool>
              <Sep $m={1} />
              <Tool $w={26} aria-label="インデントを減らす"><Indent out /></Tool>
              <Tool $w={26} aria-label="インデントを増やす"><Indent /></Tool>
            </Row>
          </Rows>
          <Sep $m={5} $tall />
          <Rows $w={169}>
            <Row $pad={5}><Item icon={<WrapIcon />} text="折り返して全体を表示する" /></Row>
            <Row $pad={5}><Item icon={<MergeIcon />} text="セルを結合して中央揃え" /><Spacer /><Drop w={16} name="結合のメニュー" /></Row>
          </Rows>
        </Group>
        <Group w={161} label="数値" pad={8} launch>
          <Rows>
            <Row><Combo $w={147}><select aria-label="表示形式"><option>標準</option></select><Chev /></Combo></Row>
            <Row>
              <Tool $w={26} aria-label="通貨表示形式"><MoneyIcon /></Tool>
              <Drop w={10} name="通貨のメニュー" />
              <Tool $w={34} aria-label="パーセント スタイル">
                <Svg w={16} h={16}><circle cx="3.800" cy="4.500" r="3" strokeWidth="1.200" /><circle cx="12.200" cy="11.500" r="3" strokeWidth="1.200" /><path d="M12.500 1L3.500 15" strokeWidth="1.200" /></Svg>
              </Tool>
              <Tool $w={22} aria-label="桁区切りスタイル">
                <Svg w={9} h={14}><path d="M1 4a3.300 3.300 0 116.800.5c0 4-2 7-5.300 8.500 1.500-2 2.200-3.500 2-5C2.500 8 1 6.500 1 4z" fill="#3b3b3b" stroke="none" /></Svg>
              </Tool>
              <Sep $m={1} />
              <Tool $w={26} aria-label="小数点以下の表示桁数を増やす"><DecIcon /></Tool>
              <Tool $w={26} aria-label="小数点以下の表示桁数を減らす"><DecIcon less /></Tool>
            </Row>
          </Rows>
        </Group>
        <Group w={191} label="スタイル" pad={2}>
          <BigButton w={58} icon={<CondIcon />} a="条件付き" b="書式" menu />
          <BigButton w={71} icon={<TableIcon />} a="テーブルとして" b="書式設定" menu />
          <BigButton w={58} icon={<StyleIcon />} a="セルの" b="スタイル" menu />
        </Group>
        <Group w={145} label="セル" pad={9}>
          <BigButton w={43} icon={<InsertIcon />} a="挿入" menu />
          <BigButton w={43} icon={<DeleteIcon />} a="削除" menu />
          <BigButton w={43} icon={<FormatIcon />} a="書式" menu />
        </Group>
        <Group w={236} label="編集" pad={12}>
          <List $w={110}>
            <ListRow><Item icon={<SigmaIcon />} text="オート SUM" /><Spacer /><Drop w={24} name="オート SUM のメニュー" /></ListRow>
            <ListRow><Item icon={<FillIcon />} text="フィル" menu /></ListRow>
            <ListRow><Item icon={<EraserIcon />} text="クリア" menu /></ListRow>
          </List>
          <BigButton w={62} icon={<SortIcon />} a="並べ替えと" b="フィルター" menu />
          <BigButton w={46} icon={<FindIcon />} a="検索と" b="選択" menu />
        </Group>
        <Group w={57} label="アドイン"><BigButton w={57} icon={<AddinIcon />} a="アド" b="イン" /></Group>
        <Group w={104} pad={6}>
          <BigButton w={46} icon={<AnalyzeIcon />} a="データ" b="分析" />
          <BigButton w={44} icon={<CopilotIcon w={30} h={28} id="big" />} a="Copilot" />
        </Group>
        <Group w={67} label="Excel Labs"><BigButton w={67} icon={<FlaskIcon />} a="Excel" b="Labs" /></Group>
        <Spacer />
        <Collapse aria-label="リボンを折りたたむ"><Chev big /></Collapse>
      </Ribbon>

      <FormulaRow>
        <Field $w={198}>
          <FieldInput aria-label="名前ボックス" defaultValue="H15" />
          <Chev big />
        </Field>
        <Grip><Svg w={2} h={12}><path d="M1 1v2M1 5v2M1 9v2" stroke="#444" strokeWidth="2" /></Svg></Grip>
        <Field $w={86}>
          <FxButton $w={14} aria-label="キャンセル"><Svg w={12} h={12}><path d="M.5.5l11 11M11.500.5l-11 11" stroke="#bdbdbd" /></Svg></FxButton>
          <FxButton $w={32} aria-label="入力"><Svg w={14} h={12}><path d="M.5 7L5 11.500 13.500.5" stroke="#bdbdbd" /></Svg></FxButton>
          <FxButton $w={21} aria-label="関数の挿入">fx</FxButton>
          <Chev c="#999" big />
        </Field>
        <FormulaGap />
        <Field>
          <FormulaInput aria-label="数式バー" defaultValue="=RANK.EQ(H7,H$3:H$7)" />
          <Chev big />
        </Field>
      </FormulaRow>

      <SheetArea>
        <GridClip>
          <Table>
            <thead>
              <tr>
                <Corner><Svg w={16} h={16}><path d="M15 0v15H0z" fill="#b4b4b4" stroke="none" /></Svg></Corner>
                {columns.map((c) => <ColHead key={c} scope="col" $on={c === "H"}>{c}</ColHead>)}
              </tr>
            </thead>
            <tbody>
              {Array.from({ length: 26 }, (_, r) => r + 1).map((row) => (
                <tr key={row}>
                  <RowHead scope="row" $on={row === 15}>{row}</RowHead>
                  {columns.map((c, col) => {
                    const { k, v, above } = cellAt(row, col);
                    return <Cell key={c} $k={k} $above={above}>{v}</Cell>;
                  })}
                </tr>
              ))}
            </tbody>
          </Table>
          <CopilotChip aria-label="Copilot"><CopilotIcon w={15} h={14} id="chip" /></CopilotChip>
          <FillOptions aria-label="オートフィル オプション">
            <Svg w={18} h={18}><path d="M8.500 3.500h7v4h-7zM8.500 12.500h7" stroke="#777" /></Svg>
          </FillOptions>
          <Arrow width="430" height="60" aria-hidden>
            <path d="M10 29L386 20 377 10 424 31 377 51 386 41 10 31z" fill="#f00" />
          </Arrow>
          <StepMark>③</StepMark>
        </GridClip>
        <VScroll>
          <Svg w={10} h={8}><path d="M5 0l4.500 7h-9z" fill="#6f6f6f" stroke="none" /></Svg>
          <VTrack><VThumb /></VTrack>
          <Svg w={10} h={8}><path d="M5 8L9.500 1h-9z" fill="#6f6f6f" stroke="none" /></Svg>
        </VScroll>
      </SheetArea>

      <SheetBar>
        <PrevButton $w={48} aria-label="前のシート"><Svg w={7} h={10}><path d="M6 .5L1 5l5 4.500" stroke="#8a8a8a" strokeWidth="1.200" /></Svg></PrevButton>
        <NavButton $w={33} aria-label="次のシート"><Svg w={7} h={10}><path d="M1 .5L6 5 1 9.500" stroke="#8a8a8a" strokeWidth="1.200" /></Svg></NavButton>
        <SheetTab><span>Sheet1</span></SheetTab>
        <TabSep />
        <NavButton $w={94} aria-label="新しいシート"><Svg w={11} h={11}><path d="M5.500 0v11M0 5.500h11" stroke="#333" /></Svg></NavButton>
        <Spacer />
        <Grip><Svg w={2} h={12}><path d="M1 1v2M1 5v2M1 9v2" stroke="#444" strokeWidth="2" /></Svg></Grip>
        <HScroll>
          <Svg w={8} h={10}><path d="M0 5L7 .5v9z" fill="#6f6f6f" stroke="none" /></Svg>
          <HThumb />
          <Svg w={8} h={10}><path d="M8 5L1 .5v9z" fill="#6f6f6f" stroke="none" /></Svg>
        </HScroll>
      </SheetBar>

      <Status>
        <span>準備完了</span>
        <Svg w={15} h={13}><path d="M6 11.500H.5V.5h13V4M.5 3h13M2.500 5.500h4M2.500 8h3" stroke="#333" /><circle cx="9.500" cy="8.500" r="3.800" stroke="#333" /><circle cx="9.500" cy="8.500" r="1.700" fill="#333" /></Svg>
        <Spacer />
        <Views>
          <ViewButton $on aria-label="標準"><Svg w={14} h={13}><path d="M.5.5h13v12H.5zM.5 4.500h13M.5 8.500h13M5 .5v12M9 .5v12" stroke="#222" /></Svg></ViewButton>
          <ViewButton aria-label="ページ レイアウト"><Svg w={14} h={13}><path d="M.5.5h13v12H.5zM3.500 2.500h7v8h-7zM5 4.500h4M5 6.500h4M5 8.500h4" stroke="#222" /></Svg></ViewButton>
          <ViewButton aria-label="改ページ プレビュー"><Svg w={14} h={13}><path d="M.5.5h13v12H.5zM.5 7.500h9v-7M5 .5v7" stroke="#222" /></Svg></ViewButton>
        </Views>
        <Zoom>
          <ZoomButton aria-label="縮小"><Svg w={9} h={9}><path d="M1 4.500h7" stroke="#333" /></Svg></ZoomButton>
          <ZoomRange type="range" min={10} max={190} defaultValue={100} aria-label="ズーム" />
          <ZoomButton aria-label="拡大"><Svg w={9} h={9}><path d="M1 4.500h7M4.500 1v7" stroke="#333" /></Svg></ZoomButton>
          <ZoomValue>100%</ZoomValue>
        </Zoom>
      </Status>
    </Shell>
  );
}
